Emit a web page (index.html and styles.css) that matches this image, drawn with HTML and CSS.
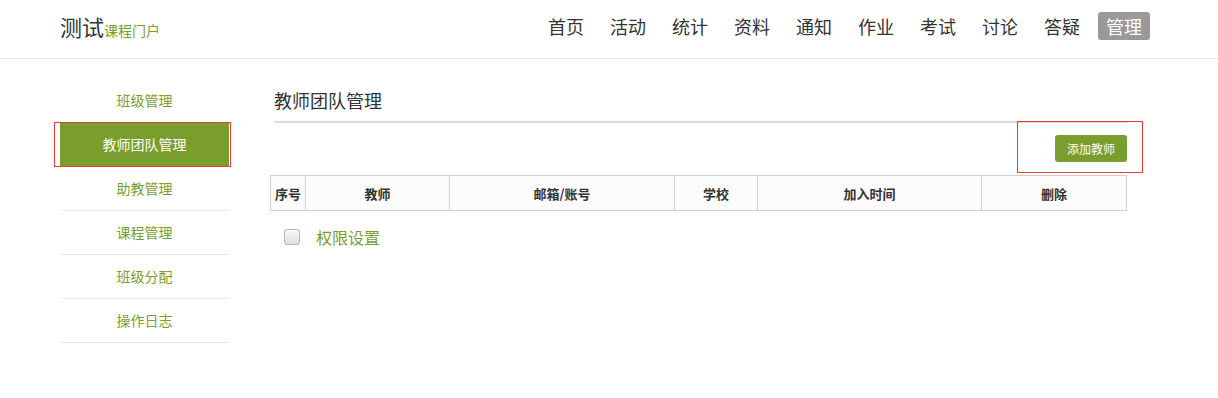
FILE: index.html
```html
<!DOCTYPE html>
<html lang="zh-CN">
<head>
    <meta charset="UTF-8">
    <title>教师团队管理</title>
    <link rel="stylesheet" href="styles.css">
</head>
<body>
    <div class="header">
        <div class="header-inner">
            <div class="logo">测试<span>课程门户</span></div>
            <ul class="nav">
                <li>首页</li>
                <li>活动</li>
                <li>统计</li>
                <li>资料</li>
                <li>通知</li>
                <li>作业</li>
                <li>考试</li>
                <li>讨论</li>
                <li>答疑</li>
                <li class="current">管理</li>
            </ul>
        </div>
    </div>

    <div class="page">
        <ul class="side">
            <li>班级管理</li>
            <li class="active"><a>教师团队管理</a></li>
            <li>助教管理</li>
            <li>课程管理</li>
            <li>班级分配</li>
            <li>操作日志</li>
        </ul>

        <div class="main">
            <div class="title">教师团队管理</div>
            <div class="toolbar">
                <span class="add-wrap"><button class="btn-add">添加教师</button></span>
            </div>
            <table class="grid">
                <tr>
                    <th class="c1">序号</th>
                    <th class="c2">教师</th>
                    <th class="c3">邮箱/账号</th>
                    <th class="c4">学校</th>
                    <th class="c5">加入时间</th>
                    <th class="c6">删除</th>
                </tr>
            </table>
            <label class="perm"><span class="box"></span>权限设置</label>
        </div>
    </div>
</body>
</html>
```

FILE: styles.css
```css
body {
    margin: 0;
    font-family: "Noto Sans CJK SC", "Liberation Sans", sans-serif;
    color: #333;
    background: #fff;
}

ul {
    list-style: none;
    margin: 0;
    padding: 0;
}

.header {
    height: 58px;
    border-bottom: 1px solid #e6e6e6;
}

.header-inner {
    width: 1090px;
    margin-left: 60px;
    height: 52px;
    display: flex;
    align-items: center;
    justify-content: space-between;
}

.logo {
    font-size: 22px;
    color: #333;
}

.logo span {
    font-size: 14px;
    color: #7a9e2e;
}

.nav {
    display: flex;
    gap: 10px;
}

.nav li {
    font-size: 18px;
    line-height: 28px;
    padding: 0 8px;
    border-radius: 3px;
}

.nav li.current {
    background: #999;
    color: #fff;
}

.page {
    display: flex;
    padding-top: 20px;
    margin-left: 60px;
}

.side {
    width: 169px;
    margin-right: 41px;
}

.side li {
    position: relative;
    height: 43px;
    line-height: 43px;
    border-bottom: 1px solid #ebebeb;
    text-align: center;
    font-size: 14px;
    color: #7a9e2e;
}

.side li.active a {
    display: block;
    background: #7a9e2e;
    color: #fff;
}

.side li.active::after {
    content: "";
    position: absolute;
    left: -6px;
    right: -2px;
    top: -1px;
    bottom: -1px;
    border: 1px solid #e8393b;
}

.main {
    width: 857px;
}

.title {
    margin-left: 4px;
    height: 42px;
    line-height: 42px;
    font-size: 18px;
    border-bottom: 2px solid #dcdcdc;
}

.toolbar {
    display: flex;
    justify-content: flex-end;
    height: 40px;
    padding-top: 12px;
}

.add-wrap {
    position: relative;
    height: 27px;
}

.add-wrap::after {
    content: "";
    position: absolute;
    left: -38px;
    right: -16px;
    top: -14px;
    bottom: -11px;
    border: 1px solid #e8393b;
}

.btn-add {
    height: 27px;
    width: 72px;
    padding: 0;
    border: none;
    border-radius: 3px;
    background: #7a9e2e;
    color: #fff;
    font-family: inherit;
    font-size: 12px;
}

.grid {
    width: 857px;
    border-collapse: collapse;
}

.grid th {
    height: 34px;
    padding: 0;
    border: 1px solid #d0d0d0;
    background: #fcfcfc;
    font-size: 13px;
    font-weight: bold;
}

.c1 { width: 34px; }
.c2 { width: 143px; }
.c3 { width: 224px; }
.c4 { width: 82px; }
.c5 { width: 223px; }

.perm {
    display: flex;
    align-items: center;
    margin: 14px 0 0 14px;
    font-size: 16px;
    color: #7a9e2e;
}

.perm .box {
    width: 14px;
    height: 14px;
    border: 1px solid #b5b5b5;
    border-radius: 3px;
    background: linear-gradient(#fafafa, #dedede);
    margin-right: 16px;
}
```
